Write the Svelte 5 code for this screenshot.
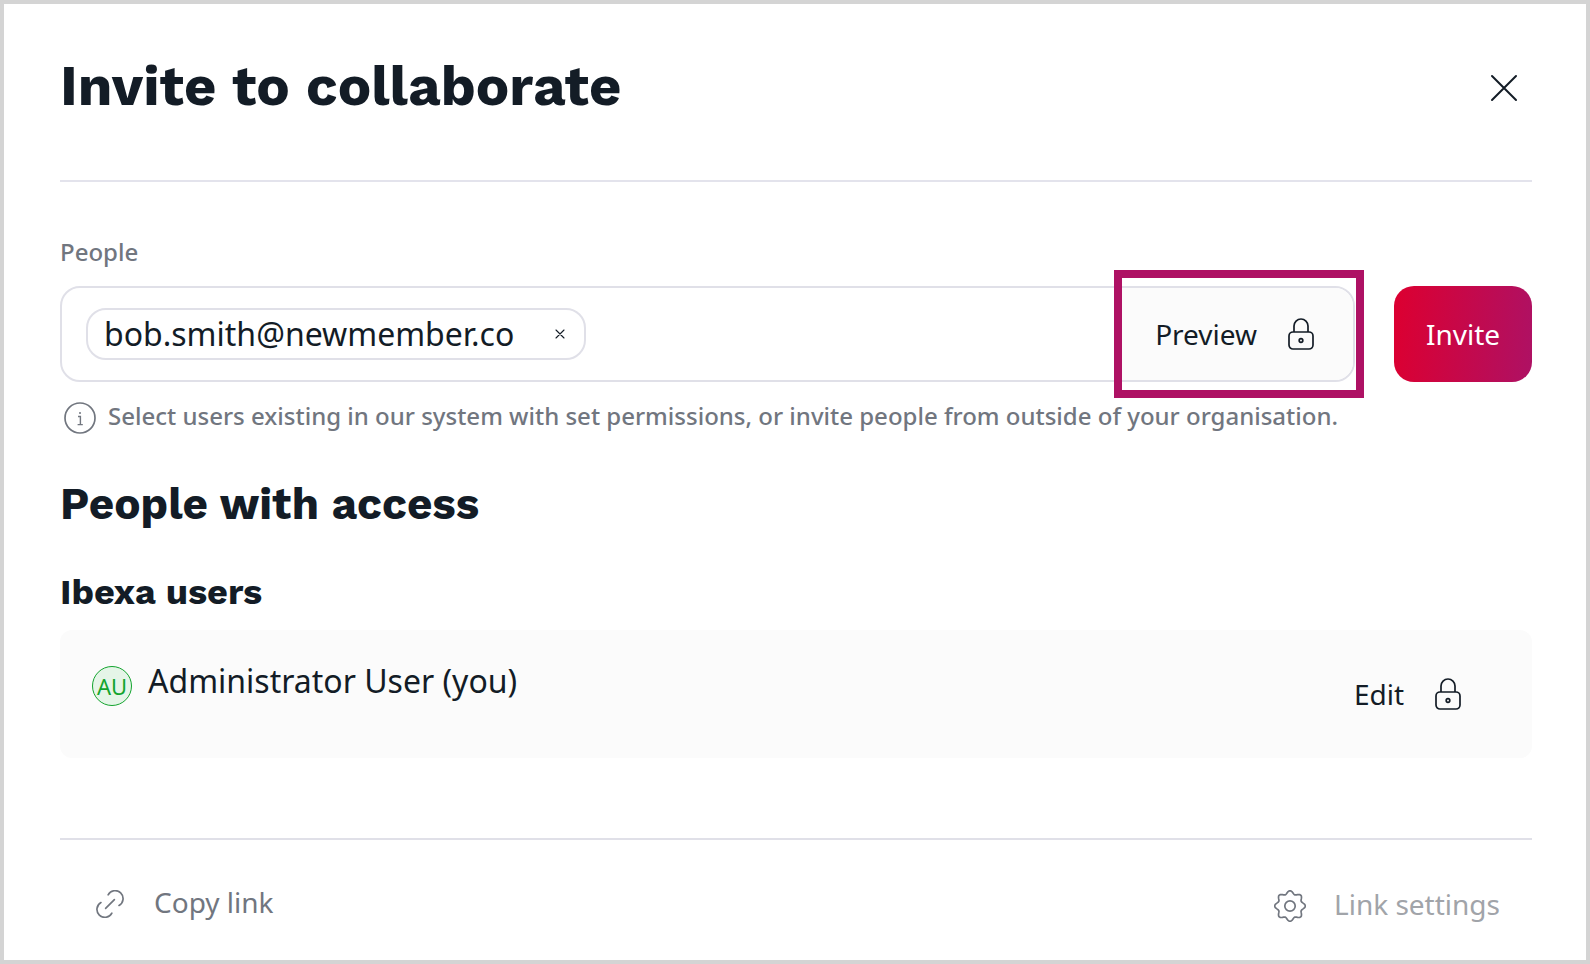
<script lang="ts">
  let invited = $state(['bob.smith@newmember.co']);
  let query = $state('');

  const users = [{ initials: 'AU', name: 'Administrator User (you)', permission: 'Edit' }];

  // Outline of the eight-toothed gear, centered in a 32x32 box
  const gearPath =
    Array.from({ length: 96 }, (_, i) => {
      const angle = (i / 96) * Math.PI * 2;
      const r = 13.7 + 1.6 * Math.cos(angle * 8);
      const x = 16 + r * Math.cos(angle);
      const y = 16 + r * Math.sin(angle);
      return `${i ? 'L' : 'M'}${x.toFixed(2)} ${y.toFixed(2)}`;
    }).join('') + 'Z';

  function removeInvited(email: string) {
    invited = invited.filter((e) => e !== email);
  }
</script>

{#snippet lock()}
  <svg width="26" height="32" viewBox="0 0 26 32" fill="none" stroke="currentColor" stroke-width="1.7" aria-hidden="true">
    <rect x="1" y="14" width="24" height="17" rx="4" />
    <path d="M6 14V8a7 7 0 0 1 14 0v6" />
    <circle cx="13" cy="22.5" r="1.8" />
  </svg>
{/snippet}

<section class="modal" role="dialog" aria-labelledby="modal-title">
  <header class="modal-header">
    <h1 id="modal-title">Invite to collaborate</h1>
    <button aria-label="Close">
      <svg width="28" height="28" viewBox="0 0 28 28" fill="none" stroke="currentColor" stroke-width="2" stroke-linecap="round">
        <path d="M2 2l24 24M26 2L2 26" />
      </svg>
    </button>
  </header>

  <div class="modal-body">
    <label class="field-label" for="people">People</label>
    <div class="invite-row">
      <div class="people-field">
        {#each invited as email}
          <span class="tag">
            {email}
            <button aria-label="Remove {email}" onclick={() => removeInvited(email)}>
              <svg width="10" height="10" viewBox="0 0 10 10" fill="none" stroke="currentColor" stroke-width="1.1" stroke-linecap="round">
                <path d="M1 1l8 8M9 1L1 9" />
              </svg>
            </button>
          </span>
        {/each}
        <input id="people" class="people-input" type="text" bind:value={query} />
        <div class="permission">
          <button class="permission-btn">
            Preview
            {@render lock()}
          </button>
          <div class="highlight"></div>
        </div>
      </div>
      <button class="invite-btn">Invite</button>
    </div>

    <p class="hint">
      <svg width="32" height="32" viewBox="0 0 32 32" fill="none" stroke="currentColor" aria-hidden="true">
        <circle cx="16" cy="16" r="15" stroke-width="1.7" />
        <path d="M14 14.5h2.4v8M13.6 22.6h5.2" stroke-width="1.4" />
        <circle cx="16" cy="11" r="1" fill="currentColor" stroke="none" />
      </svg>
      <span>Select users existing in our system with set permissions, or invite people from outside of your organisation.</span>
    </p>

    <h2>People with access</h2>
    <h3>Ibexa users</h3>
    <ul class="users">
      {#each users as user}
        <li class="user">
          <span class="avatar">{user.initials}</span>
          <span class="user-name">{user.name}</span>
          <button class="user-permission">
            {user.permission}
            {@render lock()}
          </button>
        </li>
      {/each}
    </ul>
  </div>

  <footer class="modal-footer">
    <button class="footer-btn">
      <svg width="28" height="28" viewBox="0 0 30 30" fill="none" stroke="currentColor" stroke-width="1.8" stroke-linecap="round" aria-hidden="true">
        <path d="M13 5.2A8.5 8.5 0 1 1 24.7 16.6" />
        <path d="M17 24.8A8.5 8.5 0 1 1 5.3 13.4" />
        <path d="M10.3 19.7l9.4-9.4" />
      </svg>
      Copy link
    </button>
    <button class="footer-btn settings">
      <svg width="32" height="32" viewBox="0 0 32 32" fill="none" stroke="currentColor" stroke-width="1.7" stroke-linejoin="round" aria-hidden="true">
        <path d={gearPath} />
        <circle cx="16" cy="16" r="5.2" />
      </svg>
      <span>Link settings</span>
    </button>
  </footer>
</section>

<style>
  :global(body) {
    margin: 0;
    background: #ffffff;
  }

  .modal {
    box-sizing: border-box;
    min-height: 100vh;
    padding: 0 54px 0 56px;
    border: 4px solid #d4d4d4;
    display: flex;
    flex-direction: column;
    font-family: 'Noto Sans', 'Open Sans', sans-serif;
    font-size: 28px;
    color: #131c26;
  }

  button {
    padding: 0;
    border: none;
    background: none;
    font: inherit;
    color: inherit;
    cursor: pointer;
  }

  svg {
    display: block;
    flex-shrink: 0;
  }

  h1,
  h2,
  h3 {
    margin: 0;
    font-family: 'Work Sans', Inter, 'Noto Sans', sans-serif;
    font-weight: 700;
  }

  /* Header */
  .modal-header {
    display: flex;
    align-items: center;
    justify-content: space-between;
    height: 178px;
    padding: 0 14px 8px 0;
    box-sizing: border-box;
    border-bottom: 2px solid #e3e3ec;
  }

  h1 {
    padding-bottom: 4px;
    font-size: 56px;
    line-height: 64px;
  }

  /* Invite form */
  .field-label {
    display: block;
    margin-top: 54px;
    font-size: 24px;
    font-weight: 500;
    line-height: 32px;
    color: #71767f;
  }

  .invite-row {
    display: flex;
    gap: 39px;
    margin-top: 18px;
  }

  .people-field {
    flex: 1;
    min-width: 0;
    height: 96px;
    box-sizing: border-box;
    display: flex;
    align-items: center;
    padding-left: 24px;
    border: 2px solid #e0e0e8;
    border-radius: 20px;
  }

  .tag {
    display: flex;
    align-items: center;
    gap: 41px;
    height: 52px;
    box-sizing: border-box;
    padding: 0 19px 0 16px;
    border: 2px solid #e0e0e8;
    border-radius: 20px;
    font-size: 32px;
    line-height: 48px;
  }

  .people-input {
    flex: 1;
    min-width: 0;
    height: 48px;
    padding: 0 16px;
    border: none;
    outline: none;
    background: none;
    font: inherit;
    color: inherit;
  }

  .permission {
    position: relative;
    align-self: stretch;
  }

  .permission-btn {
    display: flex;
    align-items: center;
    gap: 31px;
    height: 100%;
    padding: 0 39px 0 33px;
    border-left: 1px solid #e0e0e8;
    border-radius: 0 18px 18px 0;
    background: #fbfbfb;
  }

  .highlight {
    position: absolute;
    inset: -18px -11px -18px -7px;
    border: 8px solid #ae1164;
    pointer-events: none;
  }

  .invite-btn {
    width: 138px;
    border-radius: 20px;
    background: linear-gradient(95deg, #db0032 4%, #ae1164);
    color: #ffffff;
  }

  .hint {
    display: flex;
    align-items: flex-start;
    gap: 12px;
    margin: 20px 0 0;
    padding-left: 4px;
    font-size: 24px;
    font-weight: 500;
    line-height: 28px;
    color: #71767f;
  }

  /* People with access */
  h2 {
    margin-top: 44px;
    font-size: 44px;
    line-height: 52px;
  }

  h3 {
    margin-top: 40px;
    font-size: 36px;
    line-height: 44px;
  }

  .users {
    margin: 16px 0 0;
    padding: 0;
    list-style: none;
  }

  .user {
    display: flex;
    height: 128px;
    box-sizing: border-box;
    padding: 28px 71px 28px 32px;
    border-radius: 12px;
    background: #fbfbfb;
  }

  .avatar {
    width: 40px;
    height: 40px;
    box-sizing: border-box;
    margin-top: 8px;
    border: 1px solid #13a42e;
    border-radius: 50%;
    background: #e5f5e8;
    color: #13a42e;
    font-size: 22px;
    line-height: 38px;
    text-align: center;
  }

  .user-name {
    flex: 1;
    margin-left: 16px;
    font-size: 32px;
    line-height: 46px;
  }

  .user-permission {
    display: flex;
    align-items: center;
    gap: 31px;
  }

  /* Footer */
  .modal-footer {
    flex: 1;
    display: flex;
    align-items: center;
    justify-content: space-between;
    margin-top: 80px;
    padding: 4px 32px 0 36px;
    border-top: 2px solid #e0e0e8;
  }

  .footer-btn {
    display: flex;
    align-items: center;
    gap: 30px;
    color: #71767f;
  }

  .footer-btn svg {
    margin-top: 4px;
  }

  .settings {
    padding-top: 4px;
    gap: 28px;
  }

  .settings span {
    color: #a1a4a9;
  }
</style>
